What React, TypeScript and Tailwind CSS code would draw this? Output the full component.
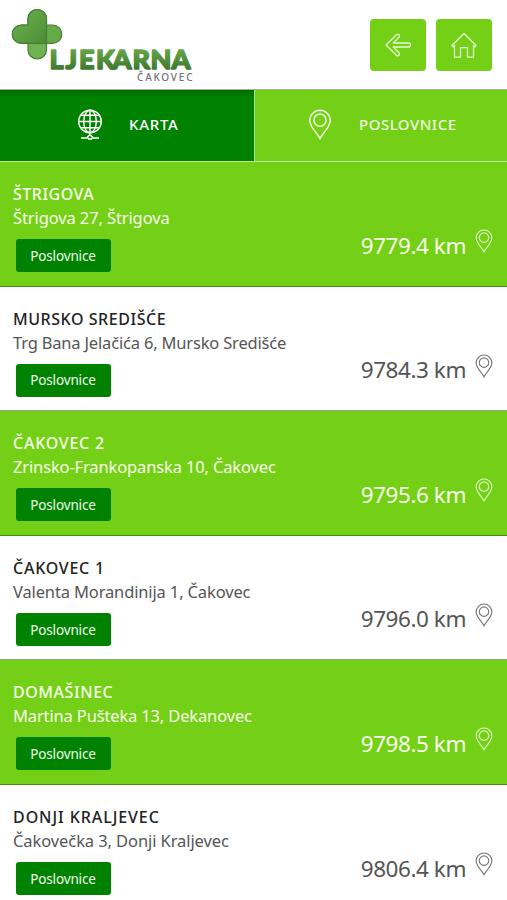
import React from 'react';

type Branch = { name: string; address: string; distance: string; nameClass: string; addressClass: string };

const branches: Branch[] = [
  { name: 'ŠTRIGOVA', address: 'Štrigova 27, Štrigova', distance: '9779.4 km', nameClass: 'tracking-[0.5px]', addressClass: 'tracking-[-0.11px]' },
  { name: 'MURSKO SREDIŠĆE', address: 'Trg Bana Jelačića 6, Mursko Središće', distance: '9784.3 km', nameClass: 'tracking-[0.55px]', addressClass: 'tracking-[-0.18px]' },
  { name: 'ČAKOVEC 2', address: 'Zrinsko-Frankopanska 10, Čakovec', distance: '9795.6 km', nameClass: 'tracking-[0.75px]', addressClass: 'tracking-[-0.14px]' },
  { name: 'ČAKOVEC 1', address: 'Valenta Morandinija 1, Čakovec', distance: '9796.0 km', nameClass: 'tracking-[0.75px]', addressClass: 'tracking-[-0.14px]' },
  { name: 'DOMAŠINEC', address: 'Martina Pušteka 13, Dekanovec', distance: '9798.5 km', nameClass: 'tracking-[0.55px]', addressClass: 'tracking-[-0.15px]' },
  { name: 'DONJI KRALJEVEC', address: 'Čakovečka 3, Donji Kraljevec', distance: '9806.4 km', nameClass: 'tracking-[0.93px]', addressClass: 'tracking-[-0.09px]' },
];

function Pin({ className, strokeWidth }: { className: string; strokeWidth: number }) {
  return (
    <svg viewBox="0 0 24 32" className={className} fill="none" stroke="currentColor" strokeWidth={strokeWidth}>
      <path d="M12 30.500C9.500 25 1.500 19 1.500 11.800a10.500 10.500 0 0 1 21 0C22.500 19 14.500 25 12 30.500Z" />
      <circle cx="12" cy="11.500" r="6.300" />
    </svg>
  );
}

function Logo() {
  return (
    <svg className="block h-[88px] w-[205px]" viewBox="0 0 205 88">
      <defs>
        <linearGradient id="cross" x1="0" y1="0" x2="1" y2="1">
          <stop offset="0" stopColor="#6fb64d" />
          <stop offset="1" stopColor="#4b8b35" />
        </linearGradient>
        <linearGradient id="word" gradientUnits="userSpaceOnUse" x1="0" y1="49" x2="0" y2="70">
          <stop offset="0" stopColor="#66a64a" />
          <stop offset="1" stopColor="#3d782f" />
        </linearGradient>
      </defs>
      <g stroke="#467c37" strokeWidth="1.200">
        <rect x="28" y="9.500" width="18.500" height="49.500" rx="9.250" fill="#70b252" />
        <rect x="12.300" y="25" width="49.500" height="18.300" rx="9.150" fill="#64ab45" />
        <path d="M28 25V18.750a9.250 9.250 0 0 1 18.500 0V43.300H21.500a9.150 9.150 0 0 1 0-18.300Z" fill="url(#cross)" />
      </g>
      <text x="49.500 65.500 79 96 112.500 132.500 150.500 171.500" y="68.500" fill="url(#word)" stroke="url(#word)" strokeWidth="1.500" strokeLinejoin="round" className="font-['Lato',sans-serif] text-[27px] font-black">LJEKARNA</text>
      <text x="137" y="80.500" textLength="55.500" lengthAdjust="spacing" fill="#737373" className="font-['Noto_Sans',sans-serif] text-[10px] font-medium">ČAKOVEC</text>
    </svg>
  );
}

export default function App() {
  return (
    <div className="h-[900px] w-[507px] overflow-hidden bg-white font-['Noto_Sans','Open_Sans',sans-serif]">
      <header className="flex h-[89px] justify-between pr-[15px]">
        <Logo />
        <div className="flex gap-[10px] pt-[19px] text-[#e5f9cf]">
          <button className="flex h-[52px] w-[56px] items-center justify-center rounded-[4px] bg-[#74d016]">
            <svg className="h-[26px] w-[28px]" viewBox="0 0 28 26" fill="none" stroke="currentColor" strokeWidth="1.300" strokeLinejoin="round">
              <path d="M2 13 12.500 2.800a1.700 1.700 0 0 1 2.500 2.400L9.300 11H24.500a2 2 0 0 1 0 4H9.300l5.700 5.800a1.700 1.700 0 0 1-2.500 2.400Z" />
            </svg>
          </button>
          <button className="flex h-[52px] w-[56px] items-center justify-center rounded-[4px] bg-[#74d016]">
            <svg className="h-[28px] w-[28px]" viewBox="0 0 28 28" fill="none" stroke="currentColor" strokeWidth="1.300" strokeLinejoin="round">
              <path d="m2 14.500 12-12 12 12-1.200 1.200-1.300-1.200v11.700h-6v-9.500h-7v9.500h-6V14.500l-1.300 1.200Z" />
            </svg>
          </button>
        </div>
      </header>

      <nav className="flex h-[73px] border-t border-b border-t-[#a8ada4] border-b-[#bbe69b] text-[15px] font-medium">
        <div className="flex w-[255px] items-center border-r border-[#b5dda1] bg-[#008200] bg-linear-to-b from-[#006b00] to-[#008200] to-10% pb-[2px] pl-[77px] text-white">
          <svg className="h-[31px] w-[26px]" viewBox="0 0 26 31" fill="none" stroke="currentColor" strokeWidth="1.400">
            <circle cx="13" cy="12.500" r="11.300" />
            <ellipse cx="13" cy="12.500" rx="6.300" ry="11.300" />
            <path d="M13 1v24M1.700 12.500h22.600M3.800 6.200h18.400M3.800 18.800h18.400M4 29h6.500M15.500 29H22" />
            <path d="m13 25.800 2.500 2.200-1 2h-3l-1-2Z" />
          </svg>
          <span className="ml-[26px] tracking-[0.700px]">KARTA</span>
        </div>
        <div className="flex flex-1 items-center bg-[#74d016] pb-[2px] pl-[53px] text-[#effbdf]">
          <Pin className="h-[31px] w-[24px]" strokeWidth={1.5} />
          <span className="ml-[27px] tracking-[0.500px]">POSLOVNICE</span>
        </div>
      </nav>

      <main>
        {branches.map((b, i) => {
          const green = i % 2 === 0;
          return (
            <section key={b.name} className={`flex h-[124.600px] justify-between border-b pr-[14px] pl-[13px] ${green ? 'border-[#438915] bg-[#74d016] text-[#f7fee9]' : 'border-[#92a780] bg-white text-[#555]'}`}>
              <div className="pt-[20px]">
                <h2 className={`h-[24px] text-[16px] leading-[24px] font-medium whitespace-nowrap ${b.nameClass} ${green ? '' : 'text-[#222]'}`}>{b.name}</h2>
                <p className={`h-[25px] text-[16.500px] leading-[24px] whitespace-nowrap ${b.addressClass}`}>{b.address}</p>
                <button className="mt-[8px] ml-[2.500px] flex h-[33px] w-[95px] items-center justify-center rounded-[3px] bg-[#008200] pt-px text-[13.500px] tracking-[-0.150px] text-[#effbea]">Poslovnice</button>
              </div>
              <div className="flex items-start pt-[67px]">
                <span className="pt-[0.600px] text-[22.500px] leading-[32px] tracking-[-0.450px] whitespace-nowrap">{b.distance}</span>
                <Pin className={`ml-[9px] h-[24px] w-[18px] ${green ? 'text-[#dcf7c0]' : 'text-[#777]'}`} strokeWidth={1.5} />
              </div>
            </section>
          );
        })}
      </main>
    </div>
  );
}
